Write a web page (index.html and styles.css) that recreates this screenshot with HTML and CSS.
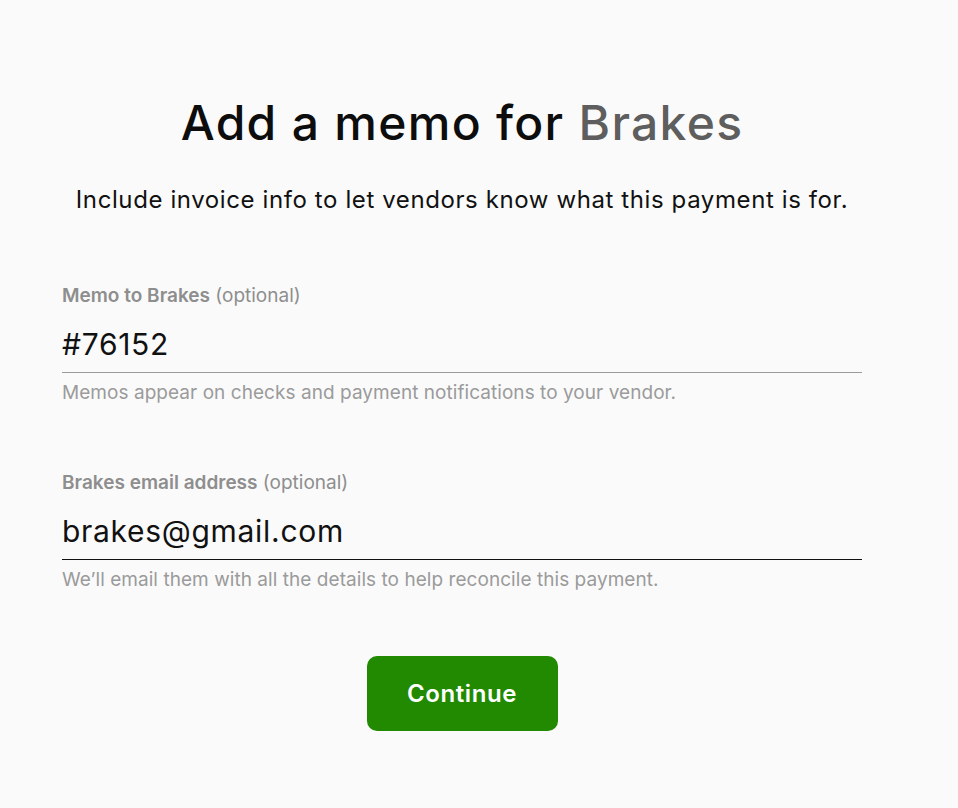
FILE: index.html
```html
<!DOCTYPE html>
<html>
<head>
    <link rel="stylesheet" href="styles.css">
</head>
<body>
    <div class="container">
        <h1>Add a memo for <span class="vendor">Brakes</span></h1>
        <p class="subtitle">Include invoice info to let vendors know what this payment is for.</p>

        <div class="field">
            <label class="label"><strong>Memo to Brakes</strong> (optional)</label>
            <div class="value">#76152</div>
            <div class="hint">Memos appear on checks and payment notifications to your vendor.</div>
        </div>

        <div class="field">
            <label class="label"><strong>Brakes email address</strong> (optional)</label>
            <div class="value focused">brakes@gmail.com</div>
            <div class="hint">We’ll email them with all the details to help reconcile this payment.</div>
        </div>

        <div class="actions">
            <button class="continue">Continue</button>
        </div>
    </div>
</body>
</html>
```

FILE: styles.css
```css
body {
    background-color: #fafafa;
    font-family: 'Inter', 'Roboto', sans-serif;
    margin: 0;
    color: #111;
}

.container {
    width: 800px;
    margin-left: 62px;
    padding-top: 94px;
}

h1 {
    margin: 0;
    text-align: center;
    font-size: 48px;
    font-weight: 500;
    line-height: 58px;
    letter-spacing: 1.3px;
    color: #0d0d0d;
}

.vendor {
    color: #5e5e5e;
}

.subtitle {
    margin: 33px 0 0;
    text-align: center;
    font-size: 24px;
    line-height: 30px;
    letter-spacing: 0.6px;
    color: #111;
}

.field {
    margin-top: 69px;
}

.field + .field {
    margin-top: 66px;
}

.label {
    display: block;
    font-size: 19px;
    line-height: 24px;
    color: #8e8e8e;
}

.label strong {
    font-weight: 600;
}

.value {
    margin-top: 18px;
    padding-bottom: 10px;
    font-size: 30px;
    line-height: 36px;
    letter-spacing: 0.7px;
    border-bottom: 1px solid #9a9a9a;
    color: #111;
}

.value.focused {
    border-bottom-color: #111;
}

.hint {
    margin-top: 8px;
    font-size: 19px;
    line-height: 24px;
    letter-spacing: 0.05px;
    color: #9b9b9b;
}

.actions {
    display: flex;
    justify-content: center;
    margin-top: 64px;
}

.continue {
    background: #218a00;
    color: white;
    border: none;
    width: 191px;
    height: 75px;
    border-radius: 10px;
    font-family: inherit;
    font-size: 24px;
    font-weight: 600;
    letter-spacing: 0.6px;
    cursor: pointer;
}
```
